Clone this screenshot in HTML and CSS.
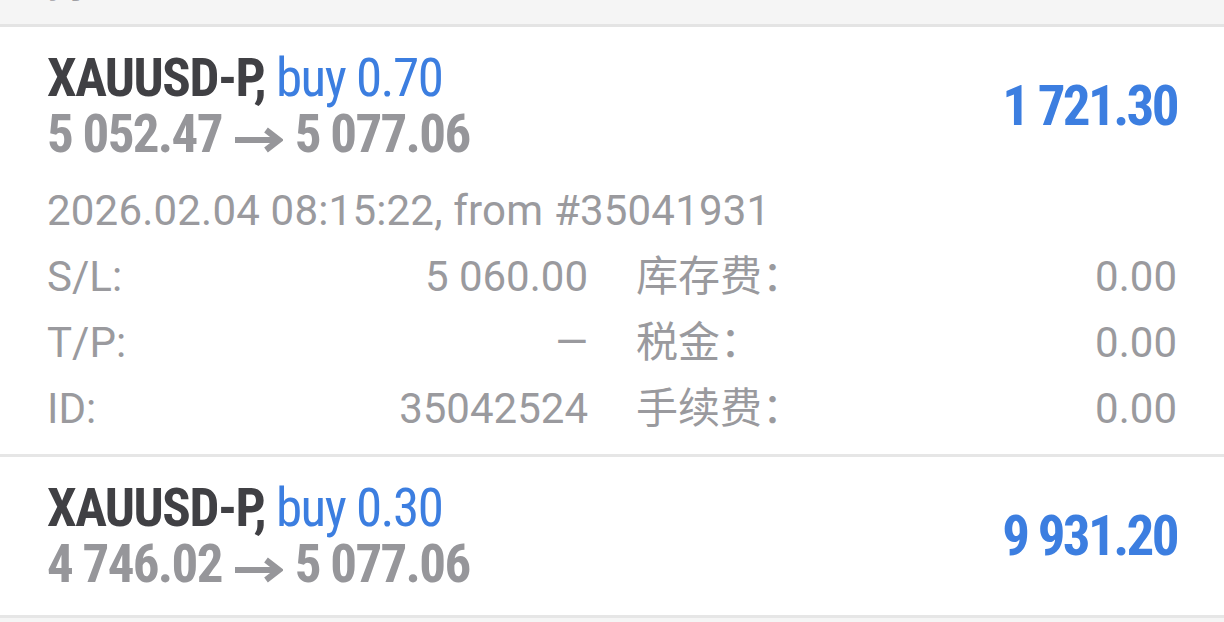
FILE: index.html
```html
<!DOCTYPE html>
<html lang="zh-CN">
<head>
  <meta charset="UTF-8">
  <meta name="viewport" content="width=device-width, initial-scale=1.0">
  <title>trades</title>
  <link rel="stylesheet" href="styles.css">
</head>
<body>
  <div class="topbar"><span class="topbar-text">持仓</span></div>

  <div class="trade open">
    <div class="trade-head">
      <div class="trade-main">
        <div class="symbol">XAUUSD-P, <span class="side">buy 0.70</span></div>
        <div class="prices">5 052.47 <svg class="arrow" viewBox="0 0 49 26"><path d="M1 13H44M32 3L45 13L32 23"/></svg> 5 077.06</div>
      </div>
      <div class="profit">1 721.30</div>
    </div>
    <div class="trade-time">2026.02.04 08:15:22, from #35041931</div>
    <div class="trade-info">
      <div class="info-cell"><span>S/L:</span><span>5 060.00</span></div>
      <div class="info-cell"><span>库存费：</span><span>0.00</span></div>
      <div class="info-cell"><span>T/P:</span><span>—</span></div>
      <div class="info-cell"><span>税金：</span><span>0.00</span></div>
      <div class="info-cell"><span>ID:</span><span>35042524</span></div>
      <div class="info-cell"><span>手续费：</span><span>0.00</span></div>
    </div>
  </div>

  <div class="trade">
    <div class="trade-head">
      <div class="trade-main">
        <div class="symbol">XAUUSD-P, <span class="side">buy 0.30</span></div>
        <div class="prices">4 746.02 <svg class="arrow" viewBox="0 0 49 26"><path d="M1 13H44M32 3L45 13L32 23"/></svg> 5 077.06</div>
      </div>
      <div class="profit">9 931.20</div>
    </div>
  </div>
</body>
</html>
```

FILE: styles.css
```css
html, body { margin:0;padding:0;height:100%;overflow:hidden }
body { background-color:#f5f5f5;font-family:Roboto, "Noto Sans CJK SC", sans-serif;color:#9a9a9e }

.topbar { background-color:#f5f5f5;border-bottom:3px solid #e4e4e4;height:24px;overflow:hidden;padding:0 47px }
.topbar-text { display:block;font-size:40px;line-height:40px;margin-top:-36px;color:#a0a0a4 }

.trade { background-color:#fff;border-bottom:3px solid #e6e6e6;padding:23px 47px }
.trade.open { padding-bottom:12px }

.trade-head { display:flex;align-items:center;justify-content:space-between }
.trade-main, .profit { font-family:"Roboto Condensed", Roboto, sans-serif;font-stretch:condensed;font-size:53px;line-height:56px;letter-spacing:-1.5px }
.symbol { color:#404044;font-weight:700 }
.side { color:#3c7ee0;font-weight:400 }
.prices { color:#96969a;font-weight:700;letter-spacing:-1.7px }
.arrow { width:49px;height:26px;margin:0 1px 0 2px;vertical-align:-1px;fill:none;stroke:#96969a;stroke-width:6 }
.profit { color:#3c7ee0;font-weight:700;font-size:55px;letter-spacing:-2.6px }

.trade-time { font-size:42px;line-height:66px;margin-top:16px;letter-spacing:0.2px }
.trade-info { display:grid;grid-template-columns:1fr 1fr;column-gap:48px;font-size:42px;line-height:66px }
.info-cell { display:flex;justify-content:space-between }
```
